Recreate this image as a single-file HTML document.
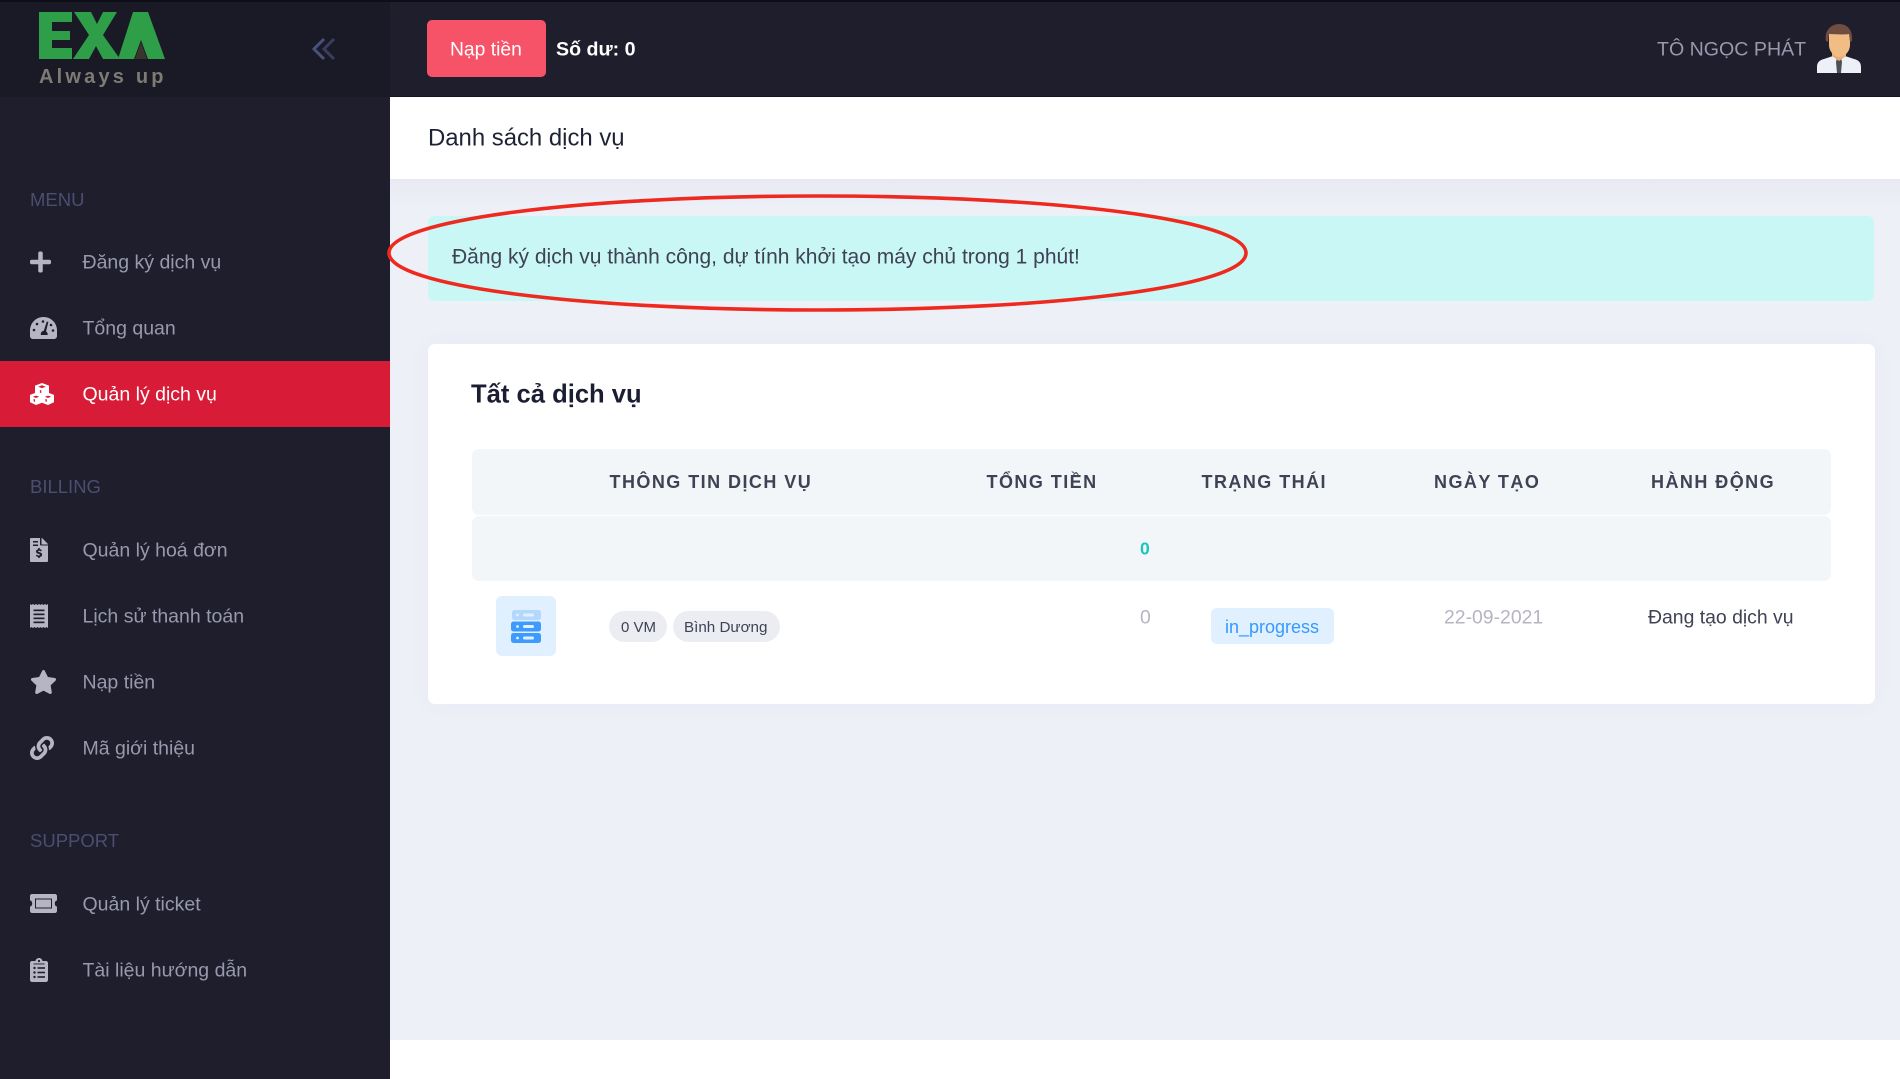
<!DOCTYPE html>
<html lang="vi">
<head>
<meta charset="utf-8">
<title>Danh sách dịch vụ</title>
<style>
html,body{margin:0;padding:0;width:1900px;height:1079px;overflow:hidden;background:#fff;font-family:"Liberation Sans","DejaVu Sans",sans-serif;}
.b{position:absolute;}
.t{position:absolute;white-space:nowrap;transform:translateY(-50%);line-height:1.2;}
.nav{font-size:19.5px;color:#9899ac;left:82.500px;}
.lab{font-size:18.5px;color:#4c4e6f;left:30px;}
.th{font-size:18px;font-weight:700;color:#3f4254;letter-spacing:1.45px;top:483px;}
svg.i{position:absolute;fill:#b5b5c3;}
</style>
</head>
<body>
<!-- page background -->
<div class="b" style="left:390px;top:97px;width:1510px;height:943px;background:#eef0f8;"></div>
<div class="b" style="left:390px;top:179px;width:1510px;height:30px;background:linear-gradient(#e8e9f2,#eef0f8);"></div>
<div class="b" style="left:390px;top:1040px;width:1510px;height:39px;background:#fff;"></div>

<!-- top bar -->
<div class="b" style="left:0;top:0;width:1900px;height:98px;background:#1e1e2d;"></div>
<div class="b" style="left:0;top:0;width:1900px;height:2px;background:#0e0e18;"></div>
<div class="b" style="left:390px;top:96px;width:1510px;height:1px;background:#14141f;"></div>

<!-- sidebar -->
<div class="b" style="left:0;top:97px;width:390px;height:982px;background:#1e1e2d;"></div>
<div class="b" style="left:0;top:2px;width:390px;height:95px;background:#1a1a27;"></div>

<!-- logo -->
<svg class="b" style="left:0;top:0;" width="200" height="70" viewBox="0 0 200 70">
  <path fill="#2f9e49" d="M39 12H72V22H52V31H70V40H52V48H72V59H39Z"/>
  <path fill="#2f9e49" d="M74 12H91L97 24L103 12H117L103 35L120 59H103L96 46L89 59H73L89 35Z"/>
  <path fill="#2f9e49" d="M133 12H148L165 59H148L141 40L134 59H118Z"/>
  <path fill="#3a352c" d="M135 59L141 42L147 59Z"/>
</svg>
<div class="t" style="left:39px;top:77px;font-size:20px;font-weight:700;letter-spacing:3.2px;color:#7e7a74;">Always up</div>

<!-- collapse chevrons -->
<svg class="b" style="left:310px;top:36px;" width="28" height="26" viewBox="0 0 28 26" fill="none">
  <path d="M14 3L4 13L14 23" stroke="#4a4f7c" stroke-width="3"/>
  <path d="M24 3L14 13L24 23" stroke="#3a3d5e" stroke-width="3"/>
</svg>

<!-- top bar content -->
<div class="b" style="left:427px;top:20px;width:119px;height:57px;background:#f65368;border-radius:5px;"></div>
<div class="t" style="left:450px;top:50px;font-size:19.3px;color:#fff;">Nạp tiền</div>
<div class="t" style="left:556px;top:50px;font-size:19.6px;font-weight:700;color:#fff;">Số dư: 0</div>
<div class="t" style="left:1657px;top:50px;font-size:19.6px;color:#9899ac;">TÔ NGỌC PHÁT</div>

<!-- avatar -->
<svg class="b" style="left:1817px;top:24px;" width="44" height="50" viewBox="0 0 44 50">
  <path fill="#eef0f8" d="M0 43c0-5 3-7 7-8l9-3h12l9 3c4 1 7 3 7 8v6H0z"/>
  <path fill="#4d5058" d="M20 34h4l1 4-1 11h-4l-1-11z"/>
  <path fill="#e8ad75" d="M15 24h14v8l-7 5-7-5z"/>
  <path fill="#f2bd85" d="M12 9h21v12c0 6-5 12-10.500 12S12 27 12 21z"/>
  <path fill="#6f4e41" d="M9 17C7 7 14 0 22 0c9 0 14 7 13 17l-2 1-1-8c-6 1-14 0-20 0l-1 8z"/>
</svg>

<!-- title bar -->
<div class="b" style="left:390px;top:97px;width:1510px;height:82px;background:#fff;"></div>
<div class="t" style="left:428px;top:139px;font-size:23.9px;color:#1e2235;">Danh sách dịch vụ</div>

<!-- alert -->
<div class="b" style="left:428px;top:216px;width:1446px;height:85px;background:#c9f7f5;border-radius:6px;"></div>
<div class="t" style="left:452px;top:257px;font-size:21px;color:#3f4254;">Đăng ký dịch vụ thành công, dự tính khởi tạo máy chủ trong 1 phút!</div>

<!-- card -->
<div class="b" style="left:428px;top:344px;width:1447px;height:360px;background:#fff;border-radius:7px;box-shadow:0 0 24px rgba(82,63,105,.04);"></div>
<div class="t" style="left:471px;top:395px;font-size:25.6px;font-weight:700;color:#1b1e33;">Tất cả dịch vụ</div>

<div class="b" style="left:472px;top:449px;width:1359px;height:66px;background:#f3f6f9;border-radius:7px;"></div>
<div class="b" style="left:472px;top:516px;width:1359px;height:65px;background:#f3f6f9;border-radius:7px;"></div>
<div class="t th" style="left:609.500px;">THÔNG TIN DỊCH VỤ</div>
<div class="t th" style="left:986.500px;">TỔNG TIỀN</div>
<div class="t th" style="left:1201.500px;">TRẠNG THÁI</div>
<div class="t th" style="left:1434px;">NGÀY TẠO</div>
<div class="t th" style="left:1651px;">HÀNH ĐỘNG</div>
<div class="t" style="left:1140px;top:549px;font-size:17.5px;font-weight:700;color:#1bc5bd;">0</div>

<!-- row -->
<div class="b" style="left:496px;top:596px;width:60px;height:60px;background:#e1f0ff;border-radius:6px;"></div>
<svg class="b" style="left:511px;top:610px;" width="31" height="33" viewBox="0 0 31 33">
  <rect x="1" y="0" width="29" height="10" rx="2.5" fill="#b4d7fd"/>
  <rect x="0" y="11.500" width="30" height="10" rx="2.5" fill="#3e9bfd"/>
  <rect x="0" y="23" width="30" height="10" rx="2.500" fill="#3e9bfd"/>
  <circle cx="6.500" cy="5" r="1.400" fill="#e1f0ff"/><rect x="12" y="3.500" width="11" height="3" rx="1.500" fill="#e1f0ff"/>
  <circle cx="6.500" cy="16.500" r="1.400" fill="#e1f0ff"/><rect x="12" y="15" width="11" height="3" rx="1.500" fill="#e1f0ff"/>
  <circle cx="6.500" cy="28" r="1.400" fill="#e1f0ff"/><rect x="12" y="26.500" width="11" height="3" rx="1.500" fill="#e1f0ff"/>
</svg>
<div class="b" style="left:609px;top:611px;width:58px;height:31px;background:#ebedf3;border-radius:16px;"></div>
<div class="t" style="left:621px;top:628px;font-size:15px;color:#3f4254;">0 VM</div>
<div class="b" style="left:673px;top:611px;width:107px;height:31px;background:#ebedf3;border-radius:16px;"></div>
<div class="t" style="left:684px;top:628px;font-size:15.2px;color:#3f4254;">Bình Dương</div>
<div class="t" style="left:1140px;top:618px;font-size:19.4px;color:#b5b5c3;">0</div>
<div class="b" style="left:1211px;top:608px;width:123px;height:36px;background:#e1f0ff;border-radius:6px;"></div>
<div class="t" style="left:1225px;top:628px;font-size:18px;color:#3699ff;">in_progress</div>
<div class="t" style="left:1444px;top:618px;font-size:19.4px;color:#b5b5c3;">22-09-2021</div>
<div class="t" style="left:1648px;top:618px;font-size:19.4px;color:#3f4254;">Đang tạo dịch vụ</div>

<!-- sidebar nav -->
<div class="t lab" style="top:200px;">MENU</div>
<div class="t lab" style="top:487px;">BILLING</div>
<div class="t lab" style="top:841px;">SUPPORT</div>

<div class="b" style="left:0;top:361px;width:390px;height:66px;background:#d81b36;"></div>

<div class="t nav" style="top:263px;">Đăng ký dịch vụ</div>
<div class="t nav" style="top:329px;">Tổng quan</div>
<div class="t nav" style="top:395px;color:#fff;">Quản lý dịch vụ</div>
<div class="t nav" style="top:551px;">Quản lý hoá đơn</div>
<div class="t nav" style="top:617px;">Lịch sử thanh toán</div>
<div class="t nav" style="top:683px;">Nạp tiền</div>
<div class="t nav" style="top:749px;">Mã giới thiệu</div>
<div class="t nav" style="top:905px;">Quản lý ticket</div>
<div class="t nav" style="top:971px;">Tài liệu hướng dẫn</div>

<!-- plus -->
<svg class="i" style="left:30px;top:250px;" width="21" height="24" viewBox="0 0 448 512"><path d="M416 208H272V64c0-17.670-14.330-32-32-32h-32c-17.670 0-32 14.330-32 32v144H32c-17.670 0-32 14.330-32 32v32c0 17.670 14.330 32 32 32h144v144c0 17.670 14.330 32 32 32h32c17.670 0 32-14.330 32-32V304h144c17.670 0 32-14.330 32-32v-32c0-17.670-14.330-32-32-32z"/></svg>

<!-- tachometer -->
<svg class="i" style="left:30px;top:317px;" width="27" height="22" viewBox="0 0 27 22">
  <path d="M13.500 0C6 0 0 6 0 13.500V19c0 1.700 1.300 3 3 3h21c1.700 0 3-1.300 3-3v-5.500C27 6 21 0 13.500 0z"/>
  <g fill="#1e1e2d">
    <path d="M16.800 4.500l1.600.5-2.400 9.500c1.300.6 1.900 2 1.600 3.500H10.900c-.5-2 .7-4 2.900-4.300z"/>
    <circle cx="13" cy="4.500" r="1.300"/><circle cx="7" cy="7" r="1.300"/><circle cx="4" cy="13" r="1.300"/><circle cx="21" cy="8" r="1.300"/><circle cx="23" cy="13.500" r="1.300"/>
  </g>
</svg>

<!-- cubes -->
<svg class="i" style="left:30px;top:383px;fill:#fff;" width="24" height="22" viewBox="0 0 24 22">
  <path d="M12 0l7 2.600v7.400l5 1.900v7.300L18 22l-6-2.300L6 22l-6-2.800v-7.300L5 10V2.600z"/>
  <g fill="#d81b36">
    <path d="M12 2.300l3.800 1.400L12 5.100 8.200 3.700z"/>
    <path d="M6 12.600l3.200 1.200L6 15l-3.200-1.200z"/>
    <path d="M18 12.600l3.200 1.200L18 15l-3.200-1.200z"/>
    <path d="M11.300 7.500v2.700l-1.400-.6V6.900z"/>
    <path d="M5 16.500v2.500l-1.400-.7v-2.400z"/>
    <path d="M16.800 16.500v2.500l-1.400-.7v-2.400z"/>
  </g>
</svg>

<!-- file invoice -->
<svg class="i" style="left:30px;top:538px;" width="18" height="24" viewBox="0 0 18 24">
  <path d="M1 0h9v6.500c0 .5.500 1 1 1h7V23c0 .6-.4 1-1 1H1c-.6 0-1-.4-1-1V1c0-.6.4-1 1-1z"/>
  <path d="M11.500 0c.300 0 .6.100.8.300l5.400 5.400c.2.200.3.500.3.800h-6.500z"/>
  <g fill="#1e1e2d">
    <rect x="3" y="3" width="5" height="1.500"/><rect x="3" y="6.500" width="5" height="1.500"/>
    <path d="M8.200 10h1.600v1.300c1 .1 1.800.6 2.100 1l-1 1.200c-.5-.5-1.100-.7-1.800-.7-.6 0-1 .2-1 .6 0 .5.700.6 1.600.9 1.200.4 2.400.9 2.400 2.400 0 1.300-1 2.100-2.300 2.300V20H8.200v-1c-1-.1-1.900-.6-2.400-1.200l1-1.200c.6.600 1.400.9 2 .9.700 0 1.100-.2 1.100-.7s-.7-.7-1.600-1c-1.200-.4-2.300-.9-2.300-2.300 0-1.300.9-2.100 2.200-2.300z"/>
  </g>
</svg>

<!-- receipt -->
<svg class="i" style="left:30px;top:604px;" width="18" height="24" viewBox="0 0 18 24">
  <path d="M0 0l1.500 1L3 0l1.500 1L6 0l1.500 1L9 0l1.500 1L12 0l1.500 1L15 0l1.500 1L18 0v24l-1.500-1-1.500 1-1.500-1-1.500 1-1.500-1L9 24l-1.500-1L6 24l-1.500-1L3 24l-1.500-1L0 24z"/>
  <g fill="#1e1e2d"><rect x="3.500" y="5.500" width="11" height="1.700"/><rect x="3.500" y="9.500" width="11" height="1.700"/><rect x="3.500" y="13.500" width="11" height="1.700"/><rect x="3.500" y="17.500" width="11" height="1.700"/></g>
</svg>

<!-- star -->
<svg class="i" style="left:30px;top:670px;" width="27" height="24" viewBox="0 0 576 512"><path d="M259.300 17.800L194 150.200 47.900 171.500c-26.200 3.800-36.700 36.100-17.700 54.600l105.700 103-25 145.500c-4.500 26.300 23.200 46 46.400 33.700L288 439.600l130.700 68.700c23.200 12.200 50.900-7.400 46.400-33.700l-25-145.500 105.700-103c19-18.500 8.500-50.800-17.700-54.600L382 150.200 316.700 17.800c-11.700-23.600-45.600-23.900-57.400 0z"/></svg>

<!-- link -->
<svg class="i" style="left:30px;top:736px;" width="24" height="24" viewBox="0 0 512 512"><path d="M326.612 185.391c59.747 59.809 58.927 155.698.36 214.590-.11.12-.24.25-.36.37l-67.200 67.200c-59.270 59.270-155.699 59.262-214.960 0-59.270-59.260-59.270-155.700 0-214.960l37.106-37.106c9.840-9.840 26.786-3.300 27.294 10.606.648 17.722 3.826 35.527 9.690 52.721 1.986 5.822.567 12.262-3.783 16.612l-13.087 13.087c-28.026 28.026-28.905 73.660-1.155 101.960 28.024 28.579 74.086 28.749 102.325.51l67.200-67.190c28.191-28.191 28.073-73.757 0-101.830-3.701-3.694-7.429-6.564-10.341-8.569a16.037 16.037 0 0 1-6.947-12.606c-.396-10.567 3.348-21.456 11.698-29.806l21.054-21.055c5.521-5.521 14.182-6.199 20.584-1.731a152.482 152.482 0 0 1 20.522 17.197zM467.547 44.449c-59.261-59.262-155.690-59.270-214.960 0l-67.200 67.200c-.12.12-.25.25-.36.37-58.566 58.892-59.387 154.781.36 214.590a152.454 152.454 0 0 0 20.521 17.196c6.402 4.468 15.064 3.789 20.584-1.731l21.054-21.055c8.350-8.350 12.094-19.239 11.698-29.806a16.037 16.037 0 0 0-6.947-12.606c-2.912-2.005-6.640-4.875-10.341-8.569-28.073-28.073-28.191-73.639 0-101.830l67.200-67.190c28.239-28.239 74.300-28.069 102.325.51 27.750 28.300 26.872 73.934-1.155 101.960l-13.087 13.087c-4.350 4.350-5.769 10.790-3.783 16.612 5.864 17.194 9.042 34.999 9.690 52.721.509 13.906 17.454 20.446 27.294 10.606l37.106-37.106c59.271-59.259 59.271-155.699.001-214.959z"/></svg>

<!-- ticket -->
<svg class="i" style="left:30px;top:894px;" width="27" height="19" viewBox="0 0 27 19">
  <path d="M2 0h23c1.100 0 2 .9 2 2v4.500c-1.300 0-2.200 1.300-2.200 3s.9 3 2.200 3V17c0 1.100-.9 2-2 2H2c-1.100 0-2-.9-2-2v-4.500c1.300 0 2.200-1.300 2.200-3S1.300 6.500 0 6.500V2C0 .9.900 0 2 0z"/>
  <rect x="5" y="4.500" width="17" height="10" fill="#1e1e2d"/>
  <rect x="6" y="5.500" width="15" height="8"/>
</svg>

<!-- clipboard list -->
<svg class="i" style="left:30px;top:958px;" width="18" height="24" viewBox="0 0 18 24">
  <path d="M2 3h3.500C5.700 1.300 7.200 0 9 0s3.300 1.300 3.500 3H16c1.100 0 2 .9 2 2v17c0 1.100-.9 2-2 2H2c-1.100 0-2-.9-2-2V5c0-1.100.9-2 2-2z"/>
  <g fill="#1e1e2d">
    <circle cx="9" cy="3" r="1.100"/>
    <circle cx="4.500" cy="10" r="1.200"/><rect x="7.500" y="9.200" width="7.500" height="1.600"/>
    <circle cx="4.500" cy="14.500" r="1.200"/><rect x="7.500" y="13.700" width="7.500" height="1.600"/>
    <circle cx="4.500" cy="19" r="1.200"/><rect x="7.500" y="18.200" width="7.500" height="1.600"/>
    <rect x="3.500" y="5.500" width="11" height=".9"/>
  </g>
</svg>

<!-- red annotation ellipse -->
<svg class="b" style="left:379px;top:188px;" width="881" height="130" viewBox="0 0 881 130" fill="none">
  <path d="M10 65C10 32 200 8 440 8C680 8 867 32 867 65C867 98 680 122 440 122C200 122 10 98 10 65Z" stroke="#ee2a1f" stroke-width="3.600"/>
</svg>
</body>
</html>
